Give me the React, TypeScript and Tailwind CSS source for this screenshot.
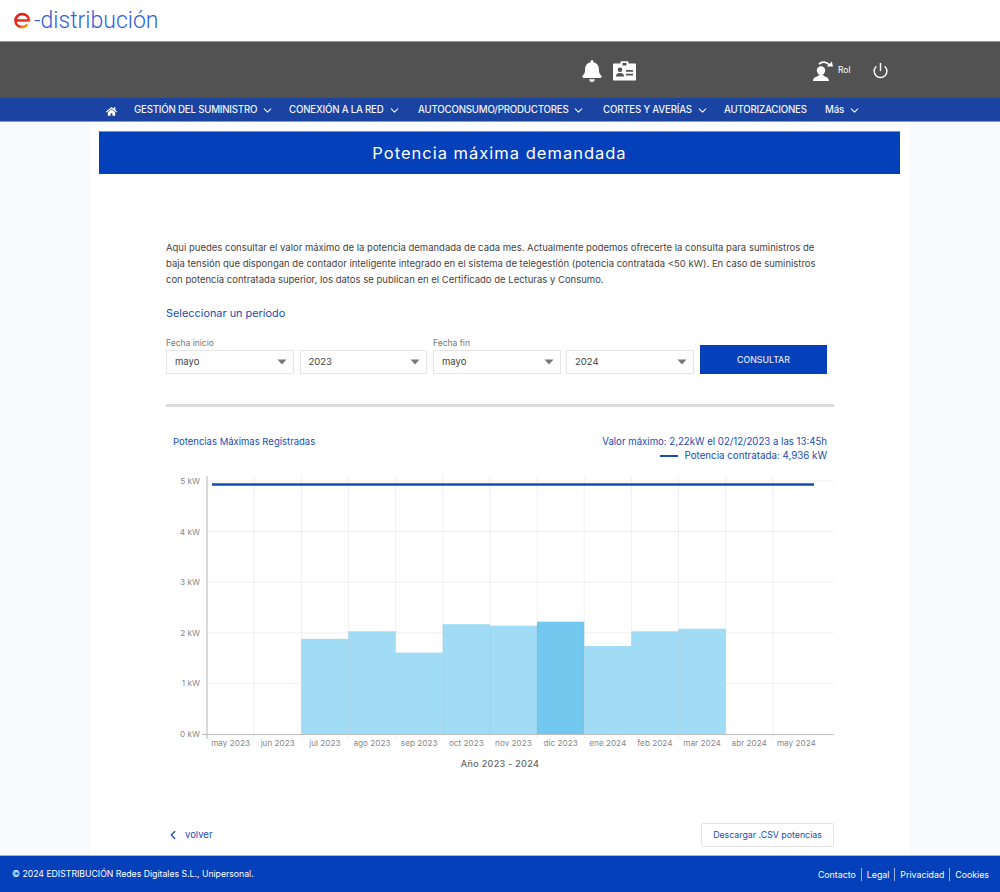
import { ChevronDown, ChevronLeft, Power } from 'lucide-react';
import { FaBell, FaHome } from 'react-icons/fa';

const navItems = [
  { label: 'GESTIÓN DEL SUMINISTRO', chevron: true, width: 'w-[155px]' },
  { label: 'CONEXIÓN A LA RED', chevron: true, width: 'w-[129px]' },
  { label: 'AUTOCONSUMO/PRODUCTORES', chevron: true, width: 'w-[185px]' },
  { label: 'CORTES Y AVERÍAS', chevron: true, width: 'w-[121px]' },
  { label: 'AUTORIZACIONES', chevron: false, width: 'w-[101px]' },
  { label: 'Más', chevron: true, width: 'w-[40px]' },
];

const months = [
  'may 2023', 'jun 2023', 'jul 2023', 'ago 2023', 'sep 2023', 'oct 2023', 'nov 2023',
  'dic 2023', 'ene 2024', 'feb 2024', 'mar 2024', 'abr 2024', 'may 2024',
];

const values = [0, 0, 1.88, 2.03, 1.61, 2.17, 2.14, 2.22, 1.74, 2.03, 2.08, 0, 0];

const X0 = 207;
const COL = 47.15;
const Y0 = 734;
const KW = 50.6;

function Select({ value }: { value: string }) {
  return (
    <div className="flex h-[24px] flex-1 items-center justify-between border border-[#e6e6e6] bg-white pl-[8px] pr-[5px] text-[9.5px] text-[#444]">
      <span>{value}</span>
      <svg width="10" height="6" viewBox="0 0 10 6" className="mr-[1px]">
        <path d="M0.5 0.5h9L5 5.5z" fill="#777" />
      </svg>
    </div>
  );
}

function Chart() {
  return (
    <svg width="820" height="320" viewBox="90 465 820 320" className="mt-[2px] block" style={{ fontFamily: 'Inter, sans-serif' }}>
      {[1, 2, 3, 4, 5].map((k) => (
        <line key={k} x1={X0} x2={834} y1={Y0 - k * KW} y2={Y0 - k * KW} stroke="#f1f1f1" strokeWidth="1" />
      ))}
      {values.map((v, i) => (
        <rect
          key={i}
          x={X0 + i * COL}
          y={Y0 - v * KW}
          width={COL}
          height={v * KW}
          fill={i === 7 ? '#73c8f0' : '#a0dcf6'}
        />
      ))}
      {months.slice(1).map((_, i) => (
        <line
          key={i}
          x1={X0 + (i + 1) * COL}
          x2={X0 + (i + 1) * COL}
          y1={476}
          y2={739}
          stroke="#000"
          strokeOpacity="0.06"
          strokeWidth="1"
        />
      ))}
      <line x1={X0} x2={X0} y1={476} y2={739} stroke="#b5b5b5" strokeWidth="1" />
      <line x1={202} x2={834} y1={Y0 + 0.5} y2={Y0 + 0.5} stroke="#bdbdbd" strokeWidth="1" />
      <line x1={212} x2={814} y1={484.5} y2={484.5} stroke="#0f4fb4" strokeWidth="2.5" />
      {[0, 1, 2, 3, 4, 5].map((k) => (
        <text key={k} x={200} y={Y0 - k * KW + 3} textAnchor="end" fontSize="8.2" fill="#888">
          {k} kW
        </text>
      ))}
      {months.map((m, i) => (
        <text key={m + i} x={X0 + (i + 0.5) * COL} y={746} textAnchor="middle" fontSize="8.2" fill="#888">
          {m}
        </text>
      ))}
      <text x={500} y={767} textAnchor="middle" fontSize="9" fontWeight="500" fill="#666" letterSpacing="0.3">
        Año 2023 - 2024
      </text>
    </svg>
  );
}

export default function App() {
  return (
    <div className="flex h-[892px] flex-col overflow-hidden bg-white font-['Inter',sans-serif]">
      {/* Logo */}
      <header className="flex h-[42px] items-center border-b border-[#999] bg-white pb-[1px] pl-[13px]">
        <svg width="19" height="19" viewBox="0 0 19 19">
          <defs>
            <linearGradient id="logo" x1="0.2" y1="0.2" x2="0.7" y2="1">
              <stop offset="0" stopColor="#e2231a" />
              <stop offset="0.65" stopColor="#e8361a" />
              <stop offset="1" stopColor="#f7a11a" />
            </linearGradient>
          </defs>
          <path
            d="M2.500 9.500h13.500c0-3.700-2.900-6.400-6.800-6.400-3.900 0-6.700 2.800-6.700 6.500 0 3.700 2.800 6.500 6.700 6.500 2.200 0 4-.9 5.300-2.400"
            fill="none"
            stroke="url(#logo)"
            strokeWidth="2.600"
          />
        </svg>
        <span className="ml-[2px] font-['Roboto',sans-serif] text-[23px] font-light leading-none text-[#2f5fdc]">-distribución</span>
      </header>

      {/* Toolbar */}
      <div className="flex h-[56px] items-center bg-[#525252] pl-[581px] pt-[1px] text-white">
        <FaBell className="h-[22px] w-[22px]" />
        <svg width="23" height="20" viewBox="0 0 23 20" className="ml-[10px]">
          <path
            fillRule="evenodd"
            fill="white"
            d="M1 2.500h6.500V1.200c0-.6.4-1 1-1h6c.6 0 1 .4 1 1v1.300H22c.6 0 1 .4 1 1V18.500c0 .6-.4 1-1 1H1c-.6 0-1-.4-1-1V3.500c0-.6.4-1 1-1zM9.500 2v2.500h4V2z"
          />
          <circle cx="7" cy="8.800" r="2.300" fill="#525252" />
          <path d="M3 15.500c0-2.400 1.600-3.400 4-3.400s4 1 4 3.400z" fill="#525252" />
          <path d="M13 9h7v1.700h-7zM13 12.800h7v1.700h-7z" fill="#525252" />
        </svg>
        <svg width="21" height="22" viewBox="0 0 21 22" className="ml-[177px]" fill="white">
          <circle cx="8" cy="10.500" r="4.200" />
          <path d="M0 21c0-3.200 2.800-4.200 5.500-5v-1.500h5V16c2.700.8 5.500 1.800 5.500 5z" />
          <path d="M6 4.300C8.500 1.300 13.500 1.300 16.500 5" fill="none" stroke="white" strokeWidth="1.700" />
          <path d="M13.800 6.500h6.200L18.800 1.500z" />
        </svg>
        <span className="ml-[4px] text-[8.5px]">Rol</span>
        <Power className="ml-[21px] h-[17px] w-[17px]" strokeWidth={2} />
      </div>

      {/* Menu */}
      <nav className="flex h-[24px] items-center border-b border-[#7f9ad6] bg-[#1a43a2] pl-[106px] pt-[2px] text-[9.7px] font-medium text-[#eef2fb]">
        <FaHome className="mr-[17px] mt-[1px] h-[11px] w-[11px] text-white" />
        {navItems.map((item) => (
          <div key={item.label} className={`flex items-center ${item.width}`}>
            <span className="whitespace-nowrap tracking-[-0.2px]">{item.label}</span>
            {item.chevron && <ChevronDown className="ml-[4px] h-[13px] w-[13px]" strokeWidth={2} />}
          </div>
        ))}
      </nav>

      {/* Content */}
      <main className="min-h-0 flex-1 bg-[#f9fafe]">
        <div className="mx-auto flex h-full w-[820px] flex-col bg-white pt-[9px]">
          <div className="ml-[9px] mr-[10px] flex h-[43px] items-center justify-center border-t border-[#6d8fd8] bg-[#0540bb] text-[16.5px] font-normal tracking-[1px] text-white">
            Potencia máxima demandada
          </div>

          <div className="px-[76px] pt-[66px]">
            <p className="pr-[5px] text-[9.5px] leading-[16px] text-[#444]">
              Aquí puedes consultar el valor máximo de la potencia demandada de cada mes. Actualmente podemos ofrecerte la consulta para suministros de baja tensión que dispongan de contador inteligente integrado en el sistema de telegestión (potencia contratada &lt;50 kW). En caso de suministros con potencia contratada superior, los datos se publican en el Certificado de Lecturas y Consumo.
            </p>
            <h2 className="mt-[17px] text-[10.9px] font-normal leading-[16px] text-[#1a4cb4]">Seleccionar un período</h2>

            <div className="mt-[16px] flex items-end pr-[7px]">
              <div className="flex w-[267px] flex-col">
                <span className="mb-[1px] text-[8.5px] leading-[12px] text-[#777]">Fecha inicio</span>
                <div className="flex gap-[6px] pr-[6px]">
                  <Select value="mayo" />
                  <Select value="2023" />
                </div>
              </div>
              <div className="flex w-[267px] flex-col">
                <span className="mb-[1px] text-[8.5px] leading-[12px] text-[#777]">Fecha fin</span>
                <div className="flex gap-[5px] pr-[6px]">
                  <Select value="mayo" />
                  <Select value="2024" />
                </div>
              </div>
              <button className="flex h-[29px] w-[127px] items-center justify-center bg-[#0540bb] text-[8.8px] font-medium text-[#dfe8fb]">
                CONSULTAR
              </button>
            </div>

            <div className="mt-[30px] h-[3px] bg-[#dcdcdc]" />

            <div className="mt-[28px] flex justify-between px-[7px] text-[#1a4cb4]">
              <span className="text-[9.5px] leading-[14px]">Potencias Máximas Registradas</span>
              <div className="flex flex-col items-end leading-[14px]">
                <span className="text-[9.65px]">Valor máximo: 2,22kW el 02/12/2023 a las 13:45h</span>
                <span className="flex items-center text-[9.75px]">
                  <span className="mr-[7px] h-[2px] w-[18px] bg-[#1a4cb4]" />
                  Potencia contratada: 4,936 kW
                </span>
              </div>
            </div>
          </div>

          <Chart />

          <div className="mt-[38px] flex items-center justify-between pl-[76px] pr-[76px]">
            <a className="flex items-center text-[9.5px] text-[#1a4cb4]">
              <ChevronLeft className="h-[14px] w-[14px]" strokeWidth={2.2} />
              <span className="ml-[5px]">volver</span>
            </a>
            <button className="h-[24px] w-[133px] rounded-[2px] border border-[#e4e4e4] bg-white text-[8.8px] text-[#1a4cb4]">
              Descargar .CSV potencias
            </button>
          </div>
        </div>
      </main>

      {/* Footer */}
      <footer className="flex h-[37px] items-center justify-between border-t border-[#9db4e4] bg-[#0540bb] pl-[12px] pr-[11px] pt-[1px] text-white">
        <span className="text-[8.7px]">© 2024 EDISTRIBUCIÓN Redes Digitales S.L., Unipersonal.</span>
        <div className="flex items-center text-[8.8px]">
          <span className="border-r border-[#9db4e4] pr-[5px]">Contacto</span>
          <span className="border-r border-[#9db4e4] px-[5px]">Legal</span>
          <span className="border-r border-[#9db4e4] px-[5px]">Privacidad</span>
          <span className="pl-[5px]">Cookies</span>
        </div>
      </footer>
    </div>
  );
}
